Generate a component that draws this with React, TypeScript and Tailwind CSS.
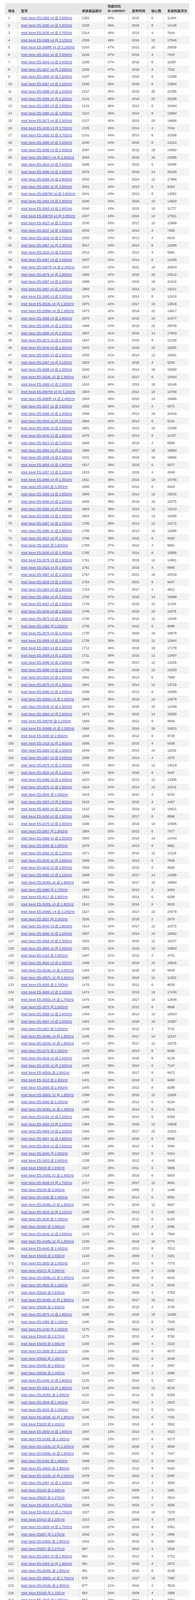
import React from "react";

type CpuRow = {
    rank: number;
    model: string;
    single: string;
    ratio: string;
    year: string;
    cores: string;
    multi: string;
};

// model, single-core score, % of i9-13900KF, release year, cores, multi-core score
const RAW = `E5-1650 v4 @ 3.60GHz,2382,50,2016,6,11454
E5-1680 v4 @ 3.40GHz,2320,49,2016,8,14146
E5-1630 v4 @ 3.70GHz,2314,49,2016,4,7644
E5-2689 v4 @ 3.10GHz,2309,49,2016,10,17040
E5-2698R v4 @ 2.20GHz,2243,47,2021,20,25605
E5-1620 v4 @ 3.50GHz,2226,47,2016,4,7433
E5-2643 v4 @ 3.40GHz,2205,47,2016,6,11087
E5-2637 v4 @ 3.50GHz,2205,47,2016,4,7322
E5-1660 v4 @ 3.20GHz,2197,46,2016,8,13398
E5-2667 v4 @ 3.20GHz,2190,46,2016,8,13934
E5-2698 v4 @ 2.20GHz,2157,46,2016,20,22355
E5-2696 v4 @ 2.20GHz,2141,45,2016,22,25298
E5-1650 v3 @ 3.50GHz,2124,45,2014,6,10404
E5-1680 v2 @ 3.00GHz,2110,45,2014,8,12694
E5-2673 v4 @ 2.30GHz,2107,45,2016,20,19868
E5-1630 v3 @ 3.70GHz,2105,45,2014,4,7434
E5-1660 v2 @ 3.70GHz,2101,44,2013,6,10268
E5-1680 v3 @ 3.20GHz,2100,44,2015,8,13214
E5-2696 v3 @ 2.30GHz,2097,44,2015,18,23650
E5-2697A v4 @ 2.60GHz,2093,44,2016,16,21665
E5-2643 v3 @ 3.40GHz,2085,44,2015,6,10465
E5-2690 v4 @ 2.60GHz,2074,44,2016,14,20140
E5-2666 v4 @ 2.80GHz,2052,43,2024,12,17958
E5-1650 v2 @ 3.50GHz,2051,43,2013,6,9304
E5-2687W v2 @ 3.40GHz,2041,43,2013,8,12081
E5-1681 v3 @ 2.90GHz,2040,43,2016,10,14820
E5-2663 v3 @ 2.80GHz,2040,43,2015,10,11777
E5-2687W v4 @ 3.00GHz,2037,43,2016,12,17501
E5-4627 v4 @ 2.60GHz,2030,43,2017,10,12969
E5-2637 v3 @ 3.50GHz,2025,43,2014,4,7455
E5-1620 v2 @ 3.70GHz,2020,43,2013,4,6525
E5-2667 v2 @ 3.30GHz,2017,43,2014,8,12266
E5-1620 v3 @ 3.50GHz,2012,43,2014,4,6991
E5-2667 v3 @ 3.20GHz,2007,42,2014,8,12440
E5-2697R v4 @ 2.30GHz,2007,42,2021,18,20843
E5-2679 v4 @ 2.50GHz,1992,42,2016,20,23512
E5-2697 v4 @ 2.30GHz,1989,42,2016,18,21616
E5-2697 v3 @ 2.60GHz,1983,42,2014,14,19221
E5-1660 v3 @ 3.00GHz,1979,42,2014,8,12410
E5-2618L v4 @ 2.20GHz,1975,42,2017,10,12816
E5-2699A v4 @ 2.40GHz,1973,42,2019,22,14917
E5-2666 v3 @ 2.90GHz,1970,42,2015,10,14377
E5-2699 v4 @ 2.20GHz,1966,42,2016,22,25039
E5-2680 v4 @ 2.40GHz,1957,41,2016,14,17843
E5-2673 v2 @ 3.30GHz,1947,41,2016,8,12128
E5-2640 v4 @ 2.40GHz,1942,41,2016,10,11893
E5-2690 v3 @ 2.60GHz,1935,41,2014,12,16461
E5-1607 v4 @ 3.10GHz,1922,41,2016,4,5245
E5-2698 v3 @ 2.30GHz,1920,41,2014,16,18590
E5-2618L v3 @ 2.30GHz,1917,41,2017,8,10464
E5-2686 v3 @ 2.00GHz,1910,40,2015,18,18148
E5-2687W v3 @ 3.10GHz,1904,40,2014,10,14784
E5-2680R v4 @ 2.40GHz,1904,40,2020,14,16865
E5-2637 v2 @ 3.50GHz,1902,40,2014,4,6371
E5-2699 v3 @ 2.30GHz,1899,40,2014,18,20418
E5-2643 v2 @ 3.50GHz,1894,40,2013,6,9134
E5-2690 v2 @ 3.00GHz,1881,40,2013,10,13490
E5-2640 v3 @ 2.60GHz,1876,40,2014,8,11337
E5-2623 v3 @ 3.00GHz,1866,39,2015,4,6869
E5-2682 v4 @ 2.50GHz,1860,39,2017,16,19564
E5-2695 v4 @ 2.10GHz,1831,39,2016,18,19656
E5-4655 v3 @ 2.90GHz,1817,38,2018,6,9377
E5-1607 v3 @ 3.10GHz,1815,38,2015,4,4948
E5-2686 v4 @ 2.30GHz,1811,38,2016,18,16745
E5-1660 @ 3.30GHz,1806,38,2012,6,8426
E5-2680 v3 @ 2.50GHz,1806,38,2014,12,15531
E5-4660 v4 @ 2.20GHz,1805,38,2019,16,15375
E5-2660 v3 @ 2.60GHz,1804,38,2014,10,13224
E5-2695 v3 @ 2.30GHz,1804,38,2014,14,16455
E5-2697 v2 @ 2.70GHz,1795,38,2013,12,14172
E5-2680 v2 @ 2.80GHz,1786,38,2013,10,12686
E5-4627 v2 @ 3.30GHz,1786,38,2015,8,9320
E5-1620 @ 3.60GHz,1769,37,2012,4,5861
E5-2630 v3 @ 2.40GHz,1765,37,2014,8,10506
E5-2678 v3 @ 2.50GHz,1761,37,2015,12,14661
E5-2623 v4 @ 2.60GHz,1761,37,2016,4,6880
E5-4667 v4 @ 2.20GHz,1757,37,2021,18,20319
E5-2628 v3 @ 2.50GHz,1754,37,2021,8,8447
E5-1603 v4 @ 2.80GHz,1753,37,2017,4,4812
E5-2660 v4 @ 2.00GHz,1750,37,2016,14,15898
E5-4627 v3 @ 2.60GHz,1749,37,2016,10,11344
E5-2630 v4 @ 2.20GHz,1746,37,2016,10,11676
E5-2673 v3 @ 2.40GHz,1740,37,2015,12,14046
E5-1650 @ 3.20GHz,1735,37,2012,6,8088
E5-2676 v4 @ 2.40GHz,1730,37,2020,16,18978
E5-2685 v3 @ 2.60GHz,1726,36,2015,12,12944
E5-2683 v4 @ 2.10GHz,1712,36,2016,16,17276
E5-2658 v3 @ 2.20GHz,1711,36,2015,12,13487
E5-2696 v2 @ 2.50GHz,1708,36,2013,12,14225
E5-2650 v4 @ 2.20GHz,1705,36,2016,12,14253
E5-2620 v3 @ 2.40GHz,1691,36,2014,6,7869
E5-2670 v3 @ 2.30GHz,1691,36,2014,12,13716
E5-2650 v2 @ 2.60GHz,1688,36,2013,8,10009
E5-2658A v3 @ 2.20GHz,1688,36,2019,12,14879
E5-2649 v3 @ 2.30GHz,1674,35,2018,10,12399
E5-2683 v3 @ 2.00GHz,1673,35,2015,14,15050
E5-2687W @ 3.10GHz,1669,35,2012,8,9946
E5-2698B v3 @ 2.00GHz,1666,35,2016,16,16633
E5-2690 @ 2.90GHz,1658,35,2012,8,9736
E5-1410 v2 @ 2.80GHz,1656,35,2015,4,5436
E5-2650 v3 @ 2.30GHz,1649,35,2014,10,11832
E5-1607 v2 @ 3.00GHz,1636,35,2014,4,4270
E5-2676 v3 @ 2.40GHz,1636,35,2015,12,14019
E5-2620 v4 @ 2.10GHz,1634,35,2016,8,9187
E5-2695 v2 @ 2.40GHz,1633,35,2013,12,13306
E5-2670 v2 @ 2.50GHz,1624,34,2014,10,11515
E5-2643 @ 3.30GHz,1615,34,2012,4,5433
E5-1603 v3 @ 2.80GHz,1615,34,2015,4,4457
E5-4650 v4 @ 2.20GHz,1610,34,2019,14,15621
E5-2450 v2 @ 2.50GHz,1609,34,2017,8,8896
E5-2470 v2 @ 2.40GHz,1596,34,2016,10,10585
E5-2667 @ 2.90GHz,1584,33,2012,6,7477
E5-2658 v4 @ 2.30GHz,1583,33,2016,14,14434
E5-2689 @ 2.60GHz,1576,33,2013,8,9681
E5-2692 v2 @ 2.20GHz,1571,33,2016,12,12119
E5-2630 v2 @ 2.60GHz,1569,33,2013,6,7508
E5-4620 v2 @ 2.60GHz,1569,33,2015,8,9540
E5-4660 v3 @ 2.10GHz,1558,33,2017,14,14256
E5-2630L v4 @ 1.80GHz,1556,33,2017,10,10864
E5-2680 @ 2.70GHz,1554,33,2012,8,9404
E5-4617 @ 2.90GHz,1552,33,2014,6,6298
E5-2630L v3 @ 1.80GHz,1543,33,2016,8,8915
E5-2699C v4 @ 2.20GHz,1527,32,2017,22,20079
E5-2637 @ 3.00GHz,1526,32,2018,2,2978
E5-4640 v3 @ 1.90GHz,1514,32,2017,12,10372
E5-2660 v2 @ 2.20GHz,1507,32,2014,10,10562
E5-2669 v3 @ 2.30GHz,1502,32,2016,12,16107
E5-4650 v2 @ 2.40GHz,1501,32,2019,10,10903
E5-1410 @ 2.80GHz,1487,31,2012,4,4701
E5-4620 v3 @ 2.00GHz,1486,31,2019,10,10525
E5-2628L v3 @ 2.00GHz,1483,31,2015,10,9949
E5-4657L v2 @ 2.40GHz,1483,31,2015,12,11353
E5-4650 @ 2.70GHz,1476,31,2012,8,8630
E5-4669 v3 @ 2.10GHz,1474,31,2015,18,17430
E5-2650L v4 @ 1.70GHz,1470,31,2017,14,12646
E5-2670 @ 2.60GHz,1469,31,2012,8,8956
E5-2658 v2 @ 2.40GHz,1469,31,2013,10,10523
E5-4667 v3 @ 2.00GHz,1461,31,2018,16,15397
E5-1607 @ 3.00GHz,1438,30,2012,4,3731
E5-2648L v4 @ 1.80GHz,1435,30,2017,14,11547
E5-2628L v4 @ 1.90GHz,1433,30,2017,12,11079
E5-2470 @ 2.30GHz,1426,30,2013,8,8296
E5-2629 v3 @ 2.40GHz,1426,30,2016,8,9139
E5-2430 v2 @ 2.50GHz,1425,30,2014,6,7147
E5-4650L @ 2.60GHz,1409,30,2017,8,8472
E5-4610 @ 2.40GHz,1401,30,2018,6,6460
E5-2665 @ 2.40GHz,1400,30,2012,8,8298
E5-2650L v3 @ 1.80GHz,1399,30,2015,12,11806
E5-2660 @ 2.20GHz,1397,30,2012,8,8104
E5-2630L v2 @ 2.40GHz,1396,30,2014,6,6519
E5-2420 v2 @ 2.20GHz,1386,29,2014,6,6306
E5-4650 v3 @ 2.10GHz,1384,29,2018,12,10838
E5-4669 v4 @ 2.20GHz,1366,29,2017,22,11523
E5-4607 v2 @ 2.60GHz,1363,29,2016,6,6986
E5-2609 v2 @ 2.50GHz,1356,29,2014,4,3466
E5-2640 @ 2.50GHz,1352,29,2012,6,6324
E5-1603 @ 2.80GHz,1338,28,2012,4,3449
E5649 @ 2.53GHz,1327,28,2011,6,5686
E5-2430L v2 @ 2.40GHz,1318,28,2015,6,5903
E5-4648 v3 @ 1.70GHz,1317,28,2017,12,9061
E5240 @ 3.00GHz,1312,28,2009,2,1448
E5-2440 @ 2.40GHz,1304,28,2014,6,6091
E5-2648L v3 @ 1.80GHz,1292,27,2016,12,9847
E5-2620 v2 @ 2.10GHz,1290,27,2013,6,6260
E5-2630 @ 2.30GHz,1286,27,2012,6,6183
E5450 @ 3.00GHz,1286,27,2009,4,2485
E5-2640 v2 @ 2.00GHz,1270,27,2014,8,7590
E5-2448L v2 @ 1.80GHz,1235,26,2018,10,6774
E5-4640 @ 2.40GHz,1233,26,2012,8,7012
E5440 @ 2.83GHz,1228,26,2009,4,2351
E5-2650 @ 2.00GHz,1223,26,2012,8,7375
E5472 @ 3.00GHz,1211,26,2009,4,2286
E5-2608L v3 @ 2.00GHz,1210,26,2018,6,6415
E5-4620 @ 2.20GHz,1207,26,2015,8,6830
E5540 @ 2.53GHz,1203,25,2009,4,2783
E5-2648L v2 @ 1.90GHz,1194,25,2017,10,8611
E5630 @ 2.53GHz,1186,25,2010,4,3730
E5-2675 v3 @ 1.80GHz,1186,25,2016,16,11960
E5-2450 @ 2.10GHz,1180,25,2015,8,7530
E5-2430 @ 2.20GHz,1175,25,2012,6,5492
E5640 @ 2.67GHz,1175,25,2010,4,3782
E5430 @ 2.66GHz,1158,24,2009,4,2210
E5-2658 @ 2.10GHz,1156,24,2012,8,6073
E5645 @ 2.40GHz,1156,24,2011,6,5046
E5462 @ 2.80GHz,1148,24,2009,4,2067
E5530 @ 2.40GHz,1144,24,2009,4,2690
E5-2440 v2 @ 1.90GHz,1139,24,2014,8,6927
E5-2651 v2 @ 1.80GHz,1136,24,2016,12,9216
E5-2630L @ 2.00GHz,1119,24,2014,6,5305
E5-2609 @ 2.40GHz,1114,24,2012,4,2823
E5-2620 @ 2.00GHz,1109,23,2012,6,5291
E5-2628L v2 @ 1.90GHz,1106,23,2015,8,7181
E5620 @ 2.40GHz,1103,23,2010,4,3592
E5-2609 v3 @ 1.90GHz,1097,23,2014,6,4423
E5-2430L @ 2.00GHz,1096,23,2017,6,5273
E5-1428L v2 @ 2.20GHz,1096,23,2019,6,6566
E5-2608L v4 @ 1.60GHz,1092,23,2022,8,7447
E5-2420 @ 1.90GHz,1089,23,2012,6,5030
E5-2650L @ 1.80GHz,1083,23,2012,8,6192
E5-2418L v2 @ 2.00GHz,1078,23,2022,6,5380
E5-2407 v2 @ 2.40GHz,1068,23,2014,4,3504
E5420 @ 2.50GHz,1060,22,2009,4,1991
E5520 @ 2.27GHz,1053,22,2009,4,2524
E5-2603 v4 @ 1.70GHz,1046,22,2016,6,4695
E5-4610 v3 @ 1.70GHz,1027,22,2019,10,7229
E5410 @ 2.33GHz,1023,22,2009,4,1878
E5-2609 v4 @ 1.70GHz,1020,22,2016,8,5351
E5607 @ 2.27GHz,1002,21,2011,4,2686
E5-2450L @ 1.80GHz,1002,21,2015,8,5880
E5507 @ 2.27GHz,997,21,2010,4,1928
E5-2603 v2 @ 1.80GHz,993,21,2014,4,2751
E5-2403 v2 @ 1.80GHz,991,21,2015,4,2873
E5-2648L @ 1.80GHz,981,21,2015,8,4235
E5-2650L v2 @ 1.70GHz,979,21,2017,10,7450
E5-2418L @ 2.00GHz,977,21,2016,4,3518
E5345 @ 2.33GHz,954,20,2008,4,1868
E5-4603 @ 2.00GHz,953,20,2014,4,3391
E5606 @ 2.13GHz,942,20,2011,4,2365
E5-2407 @ 2.20GHz,940,20,2012,4,2658
E5-2603 v3 @ 1.60GHz,930,20,2015,6,3752
E5506 @ 2.13GHz,928,20,2009,4,1944
E5405 @ 2.00GHz,877,19,2009,4,1702
E5-2603 @ 1.80GHz,871,18,2012,4,2319
E5503 @ 2.00GHz,845,18,2010,2,804
E5504 @ 2.00GHz,825,17,2009,4,1519
E5335 @ 2.00GHz,817,17,2009,4,1549
E5-2403 @ 1.80GHz,802,17,2012,4,2367
E5502 @ 1.87GHz,799,17,2009,2,837
E5205 @ 1.86GHz,788,17,2012,2,838
E5320 @ 1.86GHz,770,16,2009,4,1469
E5603 @ 1.60GHz,712,15,2011,4,1935
E5310 @ 1.60GHz,640,14,2009,4,1306`;

const rows: CpuRow[] = RAW.split("\n").map((line, index) => {
    const [model, single, ratio, year, cores, multi] = line.split(",");
    return {
        rank: index + 1,
        model: `Intel Xeon ${model}`,
        single,
        ratio: `${ratio}%`,
        year,
        cores,
        multi,
    };
});

const GRID = "grid grid-cols-[33px_156px_66px_62px_50px_41px_64px]";
const CELL = "flex items-center overflow-hidden pl-2 whitespace-nowrap border-r border-[#dcdcdc]";

const HeaderCell = ({ children, last }: { children: React.ReactNode; last?: boolean }) => (
    <div
        className={`flex items-end overflow-hidden pl-2 pb-[3px] leading-[12px] ${
            last ? "" : "border-r border-[#f4f4f4]"
        }`}
    >
        <div>{children}</div>
    </div>
);

export default function App() {
    return (
        <div className="bg-white pt-2 pb-[9px] pl-[13px] pr-[15px]">
            <div
                className="w-[472px] text-[8.5px] leading-[12px] text-[#4a4a4a]"
                style={{ fontFamily: '"Liberation Sans", "Noto Sans CJK SC", Arial, sans-serif' }}
            >
                <div className={`${GRID} h-[29px] overflow-hidden rounded-tl-[5px] bg-[#e6e6e6] font-bold text-[#333]`}>
                    <HeaderCell>排名</HeaderCell>
                    <HeaderCell>型号</HeaderCell>
                    <HeaderCell>单核最高跑分</HeaderCell>
                    <HeaderCell>
                        性能对比
                        <br />
                        i9-13900KF
                    </HeaderCell>
                    <HeaderCell>发布时间</HeaderCell>
                    <HeaderCell>核心数</HeaderCell>
                    <HeaderCell last>多核性能评分</HeaderCell>
                </div>

                {rows.map((row) => (
                    <div
                        key={row.rank}
                        className={`${GRID} h-[18.75px] overflow-hidden ${row.rank % 2 === 0 ? "bg-[#f3f3f3]" : "bg-white"}`}
                    >
                        <div className={CELL}>{row.rank}</div>
                        <div className={CELL}>
                            <a href="#" className="text-[#3b3bcf] underline underline-offset-[1px]">
                                {row.model}
                            </a>
                        </div>
                        <div className={CELL}>{row.single}</div>
                        <div className={CELL}>{row.ratio}</div>
                        <div className={CELL}>{row.year}</div>
                        <div className={CELL}>{row.cores}</div>
                        <div className="flex items-center pl-2">{row.multi}</div>
                    </div>
                ))}
            </div>
        </div>
    );
}
